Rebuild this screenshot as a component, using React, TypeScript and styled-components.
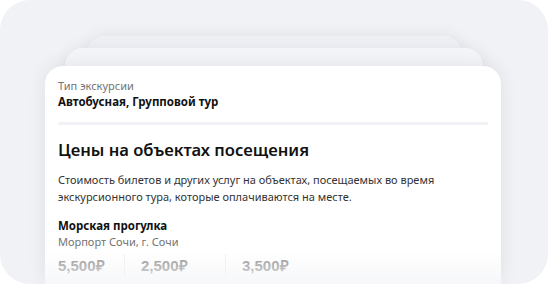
import styled, { createGlobalStyle } from "styled-components";

const GlobalStyle = createGlobalStyle`
  html, body {
    margin: 0;
    padding: 0;
    background: #ffffff;
  }
  body {
    font-family: "Noto Sans", "Open Sans", sans-serif;
  }
`;

const prices = ["5,500₽", "2,500₽", "3,500₽"];

export default () => {
  return (
    <>
      <GlobalStyle />
      <Frame>
        <BackCard $width={375} $tone="#eef0f4" $overlap={28} />
        <BackCard $width={418} $tone="#f4f5f8" $overlap={22} />
        <Card>
          <Label>Тип экскурсии</Label>
          <Value>Автобусная, Групповой тур</Value>
          <Divider />
          <Heading>Цены на объектах посещения</Heading>
          <Text>
            Стоимость билетов и других услуг на объектах, посещаемых во время
            экскурсионного тура, которые оплачиваются на месте.
          </Text>
          <Place>Морская прогулка</Place>
          <Label>Морпорт Сочи, г. Сочи</Label>
          <PriceRow>
            {prices.map((p) => (
              <Price key={p}>{p}</Price>
            ))}
          </PriceRow>
          <Fade />
        </Card>
      </Frame>
    </>
  );
};

const Frame = styled.div`
  width: 548px;
  height: 284px;
  box-sizing: border-box;
  padding-top: 36px;
  background: #f1f2f5;
  border-radius: 30px;
  overflow: hidden;
  display: flex;
  flex-direction: column;
  align-items: center;
`;

const BackCard = styled.div<{ $width: number; $tone: string; $overlap: number }>`
  width: ${(p) => p.$width}px;
  height: 40px;
  margin-bottom: -${(p) => p.$overlap}px;
  flex-shrink: 0;
  border-radius: 18px 18px 0 0;
  background: linear-gradient(180deg, ${(p) => p.$tone} 0%, #f7f8fa 100%);
  box-shadow: 0 -2px 14px rgba(40, 50, 90, 0.07);
`;

const Card = styled.div`
  position: relative;
  width: 456px;
  margin-left: -2px;
  flex: 1;
  box-sizing: border-box;
  padding: 12px 13px 0;
  background: #ffffff;
  border-radius: 18px 18px 0 0;
  box-shadow: 0 -2px 18px rgba(40, 50, 90, 0.09);
  display: flex;
  flex-direction: column;
`;

const Label = styled.div`
  font-size: 11px;
  line-height: 16px;
  color: #737373;
`;

const Value = styled.div`
  font-size: 11.5px;
  line-height: 16px;
  font-weight: 700;
  color: #111;
`;

const Divider = styled.div`
  height: 3px;
  margin: 12px 0 14px;
  background: #f1f2f6;
  border-radius: 2px;
`;

const Heading = styled.div`
  font-size: 16.6px;
  line-height: 22px;
  font-weight: 600;
  color: #111;
`;

const Text = styled.div`
  margin-top: 10px;
  font-size: 11px;
  line-height: 17px;
  color: #333;
  width: 400px;
`;

const Place = styled.div`
  margin-top: 12px;
  font-size: 11.5px;
  line-height: 17px;
  font-weight: 700;
  color: #111;
`;

const PriceRow = styled.div`
  display: flex;
  margin-top: 4px;
`;

const Price = styled.div`
  font-family: "Liberation Sans", Arial, sans-serif;
  font-size: 15px;
  line-height: 24px;
  font-weight: 700;
  color: #8c8c8c;
  padding-right: 20px;
  &:first-child {
    width: 46px;
  }
  &:nth-child(2) {
    width: 64px;
  }
  & + & {
    padding-left: 16px;
    border-left: 1px solid #eeeff2;
  }
`;

const Fade = styled.div`
  position: absolute;
  left: 0;
  right: 0;
  bottom: 0;
  height: 34px;
  background: linear-gradient(180deg, rgba(247, 248, 250, 0) 0%, rgba(245, 246, 248, 0.85) 100%);
  pointer-events: none;
`;
